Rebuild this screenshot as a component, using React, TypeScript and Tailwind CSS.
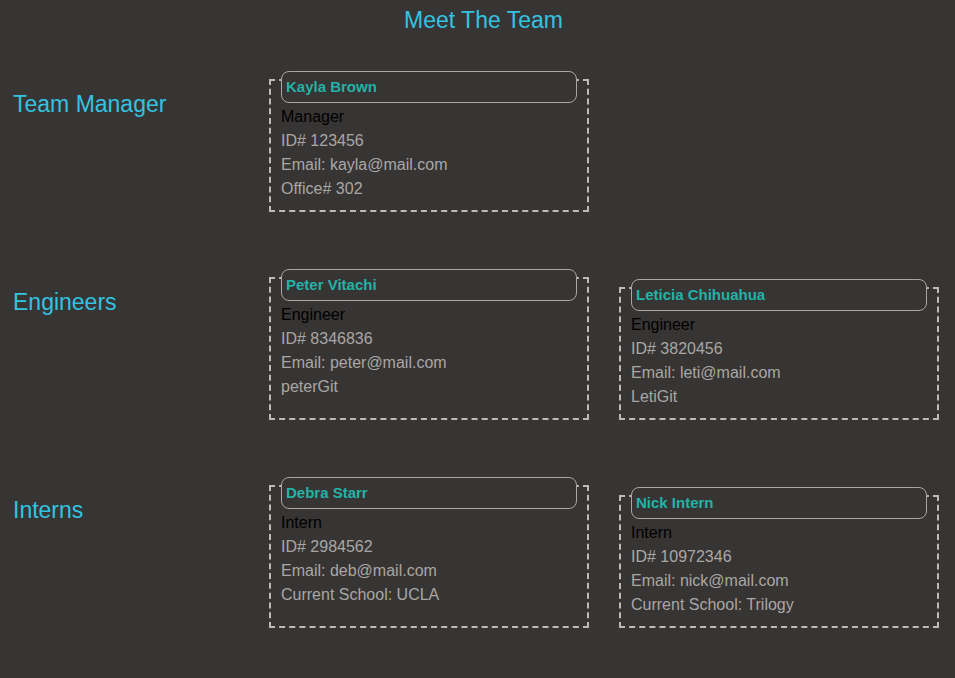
const team = [
  {
    title: "Team Manager",
    members: [
      { name: "Kayla Brown", role: "Manager", id: "123456", email: "kayla@mail.com", extra: "Office# 302" },
    ],
  },
  {
    title: "Engineers",
    members: [
      { name: "Peter Vitachi", role: "Engineer", id: "8346836", email: "peter@mail.com", extra: "peterGit" },
      { name: "Leticia Chihuahua", role: "Engineer", id: "3820456", email: "leti@mail.com", extra: "LetiGit" },
    ],
  },
  {
    title: "Interns",
    members: [
      { name: "Debra Starr", role: "Intern", id: "2984562", email: "deb@mail.com", extra: "Current School: UCLA" },
      { name: "Nick Intern", role: "Intern", id: "10972346", email: "nick@mail.com", extra: "Current School: Trilogy" },
    ],
  },
];

type Member = (typeof team)[number]["members"][number];

function Card({ member, tall }: { member: Member; tall: boolean }) {
  return (
    <div
      className={`w-[320px] border-2 border-dashed border-[#bdbbb9] px-[10px] ${
        tall ? "pb-[19px]" : "pb-[9px]"
      }`}
    >
      <div className="-mt-[10px] h-[32px] rounded-[8px] border border-[#a9a7a5] bg-[#373434] pl-[4px] flex items-center">
        <span className="text-[15px] font-bold text-[#22b3a6]">{member.name}</span>
      </div>
      <div className="pt-[2px] text-[16px] leading-[24px]">
        <p className="text-black">{member.role}</p>
        <p className="text-[#a9a7a4]">ID# {member.id}</p>
        <p className="text-[#a9a7a4]">Email: {member.email}</p>
        <p className="text-[#a9a7a4]">{member.extra}</p>
      </div>
    </div>
  );
}

export default function App() {
  return (
    <div
      className="min-h-[678px] bg-[#373434]"
      style={{ fontFamily: '"Liberation Sans", Arial, sans-serif' }}
    >
      <h1 className="pt-[6px] pl-[12px] text-center text-[23px] leading-[28px] text-[#33c3e0]">
        Meet The Team
      </h1>
      <div className="mt-[45px] flex flex-col gap-[65px]">
        {team.map((section) => (
          <div key={section.title} className="flex items-start">
            <h2 className="w-[269px] shrink-0 pl-[13px] pt-[11px] text-[23px] leading-[28px] text-[#33c3e0]">
              {section.title}
            </h2>
            <div className="flex items-end gap-[30px]">
              {section.members.map((m, i) => (
                <Card key={m.name} member={m} tall={section.members.length > 1 && i === 0} />
              ))}
            </div>
          </div>
        ))}
      </div>
    </div>
  );
}
